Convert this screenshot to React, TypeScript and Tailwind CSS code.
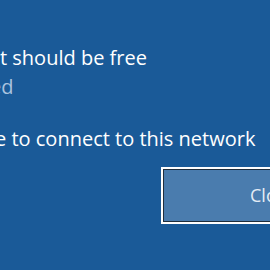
export default function App() {
  const font = { fontFamily: '"Open Sans", "Noto Sans", sans-serif' };
  return (
    <div className="w-[270px] h-[270px] bg-[#1a5a98] overflow-hidden flex flex-col" style={font}>
      <div className="mt-[43px] text-[20px] leading-[29px] text-white whitespace-nowrap ml-[0px]">
        t should be free
      </div>
      <div className="text-[20px] leading-[29px] text-[#a9c3df] whitespace-nowrap ml-[-10px]">
        ed
      </div>
      <div className="mt-[23px] text-[20px] leading-[29px] text-white whitespace-nowrap ml-[-5px]">
        e to connect to this network
      </div>
      <div className="mt-[14px] ml-[161px] w-[200px] h-[57px] shrink-0 border-2 border-white">
        <div className="h-full border border-[#1f2d3c] bg-[#4a7cae] flex items-center pl-[86px] text-[18px] text-[#e4ecf5] whitespace-nowrap">
          Close
        </div>
      </div>
    </div>
  );
}
